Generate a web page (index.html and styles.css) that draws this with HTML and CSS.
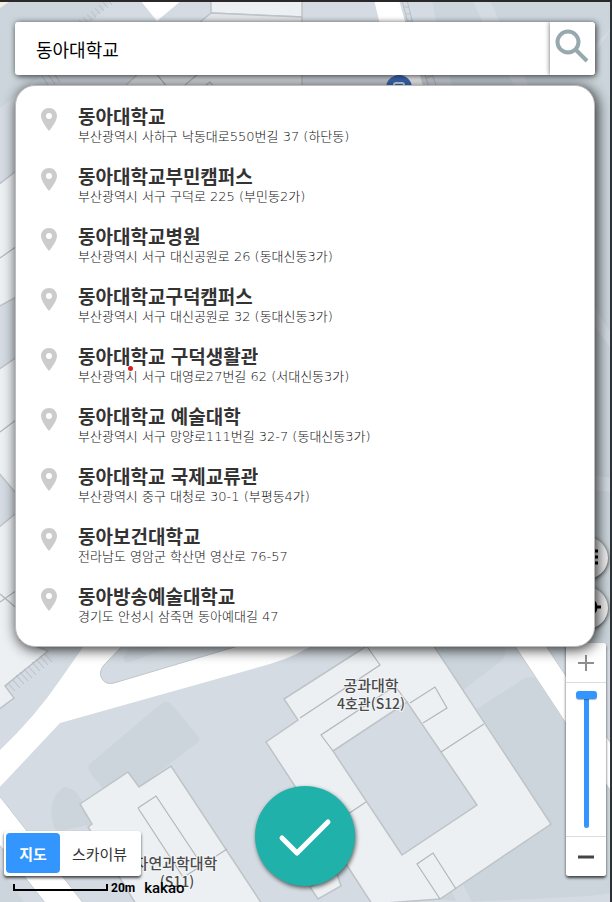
FILE: index.html
```html
<!DOCTYPE html>
<html lang="ko">
<head>
<meta charset="utf-8">
<meta name="viewport" content="width=device-width, initial-scale=1">
<title>동아대학교</title>
<link rel="stylesheet" href="styles.css">
</head>
<body>
<main class="stage">
  <svg class="map" viewBox="0 2 610 900" preserveAspectRatio="xMidYMin slice" aria-hidden="true">
    <rect class="ground" y="0" width="612" height="904"/>
    <!-- upper area -->
    <path class="green" d="M0 0H112L42 75 0 108Z"/>
    <path class="cream" d="M0 2H9L0 8Z"/>
    <path class="hatch" d="M79 20l5 6M83 17l5 6M87 14l5 6M91 11l5 6M95 8l5 6M99 5l5 6M103 2l5 6M108 0l4 5M42 76l6 9M47 73l8 11M52 71l8 11"/>
    <path class="road" d="M140 0H182L157 21Z"/>
    <path class="building" d="M211 0V13L302 17V0Z"/>
    <path class="building shade" d="M211 13L302 17V100H110L140 72Z"/>
    <path class="wall" d="M155 72L168 88M199 73L184 86M202 88l8-6 4 5"/>
    <path class="green" d="M432 0L440 40 470 100H612V650H580V90H500Z"/>
    <path class="green" d="M432 0H612V100H455Z"/>
    <path class="ground" d="M472 0H490L530 90H516ZM612 28L590 62V48ZM590 300L612 335V350L590 320ZM590 475L612 478V492L590 490Z"/>
    <path class="road" d="M374 0H399L424 90H396Z"/>
    <path class="hatch" d="M402 0L408 24 430 90M407 0L413 24 438 90M404 7h5M406 14h5M408 21h5M425 78l7-2"/>
    <circle cx="399" cy="88" r="13" fill="#3f6fc0"/>
    <rect x="394" y="83" width="10" height="8" rx="2" fill="none" stroke="#dfe9f8" stroke-width="2"/>
    <!-- left edge -->
    <path class="building" d="M-2 185L20 168V295L-2 307ZM-2 370L20 355V498L-2 472ZM-2 528L20 510V640L48 651 5 686 14 698-2 710Z"/>
    <path class="wall" d="M0 258L20 244M0 432L20 417M0 602L20 588M0 594L20 611"/>
    <path class="hatch" d="M48 651L5 686M44 653l8 9M40 656l8 9M36 659l8 9M32 662l8 9M28 666l8 9M24 669l8 9M20 672l8 9M16 675l8 9M12 679l8 9M8 683l7 8"/>
    <!-- lower left roads and greens -->
    <path class="road" d="M-2 752Q35 717 60 680L88 640H320Q300 655 270 664L60 723-2 789Z"/>
    <path class="island" d="M128 640L104 665Q98 672 102 679 106 685 114 683L238 646V640Z"/>
    <path class="green" d="M130 647L123 658Q125 664 130 662L170 647Z"/>
    <path class="green" d="M161 704Q167 699 172 705L198 736Q201 740 197 743L139 787 104 790 89 771Q87 766 91 763ZM64 787Q76 788 82 801L92 824 56 832Q44 801 64 787ZM0 868L24 902H0Z"/>
    <path class="road edge" d="M-2 794L84 904H46L-2 843Z"/>
    <path class="building" d="M80 804L128 772 139 787 171 766 262 904H136L88 827 92 824Z"/>
    <path class="wall" d="M138 808L156 796 202 865M138 808L185 880M227 849L184 877"/>
    <!-- lower right greens and road -->
    <path class="green" d="M432 640H505Q507 656 501 661L463 690ZM477 709L522 680Q529 675 535 678L612 790V895L465 902 440 899 551 824Z"/>
    <path class="ground" d="M450 889L462 882 473 904H458ZM545 902L612 893V904Z"/>
    <path class="road edge" d="M511 640H542L614 748V796Z"/>
    <!-- engineering hall -->
    <path class="building" d="M284 699L376 640H430L551 824 440 899 372 904 348 867 266 742 298 720Z"/>
    <path class="ground outline" d="M333 751L407 702 477 805 402 855Z"/>
    <path class="wall" d="M366 645L380 665 300 718M333 751L321 735 395 686 407 702M410 703L435 687 447 708 423 723M441 752L484 724M366 802L348 814M456 889L433 853 417 864 440 899"/>
    <path class="building" d="M310 887L337 874 341 886 318 899Z"/>
    <g class="map-label">
      <text x="371" y="691">공과대학</text>
      <text class="code" x="371" y="709">4호관(S12)</text>
      <text x="176" y="869">자연과학대학</text>
      <text class="code" x="177" y="887">(S11)</text>
    </g>
  </svg>

  <form class="search">
    <input class="search-input" type="text" value="동아대학교" aria-label="장소 검색">
    <button class="search-button" type="button" aria-label="검색">
      <svg width="45" height="53" viewBox="0 0 45 53"><circle cx="18" cy="20" r="10.5"/><path d="M25 27L37 39"/></svg>
    </button>
  </form>

  <svg class="defs" aria-hidden="true"><symbol id="pin" viewBox="0 0 16 23"><path fill-rule="evenodd" d="M8 0C3.500 0 0 3.500 0 8c0 5.500 8 15 8 15s8-9.500 8-15c0-4.500-3.500-8-8-8Zm0 5a3 3 0 1 1 0 6 3 3 0 0 1 0-6Z"/></symbol></svg>
  <ul class="results">
    <li><a class="place" href="#1"><svg class="pin"><use href="#pin"/></svg><span class="text"><strong>동아대학교</strong><span class="address">부산광역시 사하구 낙동대로550번길 37 (하단동)</span></span></a></li>
    <li><a class="place" href="#2"><svg class="pin"><use href="#pin"/></svg><span class="text"><strong>동아대학교부민캠퍼스</strong><span class="address">부산광역시 서구 구덕로 225 (부민동2가)</span></span></a></li>
    <li><a class="place" href="#3"><svg class="pin"><use href="#pin"/></svg><span class="text"><strong>동아대학교병원</strong><span class="address">부산광역시 서구 대신공원로 26 (동대신동3가)</span></span></a></li>
    <li><a class="place" href="#4"><svg class="pin"><use href="#pin"/></svg><span class="text"><strong>동아대학교구덕캠퍼스</strong><span class="address">부산광역시 서구 대신공원로 32 (동대신동3가)</span></span></a></li>
    <li><a class="place" href="#5"><svg class="pin"><use href="#pin"/></svg><span class="text"><strong>동아대학교 구덕생활관</strong><span class="address">부산광역시 서구 대영로27번길 62 (서대신동3가)</span></span><span class="dot"></span></a></li>
    <li><a class="place" href="#6"><svg class="pin"><use href="#pin"/></svg><span class="text"><strong>동아대학교 예술대학</strong><span class="address">부산광역시 서구 망양로111번길 32-7 (동대신동3가)</span></span></a></li>
    <li><a class="place" href="#7"><svg class="pin"><use href="#pin"/></svg><span class="text"><strong>동아대학교 국제교류관</strong><span class="address">부산광역시 중구 대청로 30-1 (부평동4가)</span></span></a></li>
    <li><a class="place" href="#8"><svg class="pin"><use href="#pin"/></svg><span class="text"><strong>동아보건대학교</strong><span class="address">전라남도 영암군 학산면 영산로 76-57</span></span></a></li>
    <li><a class="place" href="#9"><svg class="pin"><use href="#pin"/></svg><span class="text"><strong>동아방송예술대학교</strong><span class="address">경기도 안성시 삼죽면 동아예대길 47</span></span></a></li>
  </ul>

  <div class="tools">
    <button class="round" type="button" aria-label="목록"><svg width="42" height="42" viewBox="0 0 42 42"><path d="M14 14H32M14 20H32M14 26H32"/></svg></button>
    <button class="round" type="button" aria-label="현재 위치"><svg width="42" height="42" viewBox="0 0 42 42"><circle cx="22" cy="20" r="8"/><path d="M22 7v7M22 26v7M9 20h7M28 20h7"/></svg></button>
    <div class="zoom">
      <button type="button" aria-label="확대"><svg class="plus" width="16" height="16" viewBox="0 0 16 16"><path d="M8 0V16M0 8H16"/></svg></button>
      <input class="level" type="range" min="1" max="14" value="1" aria-label="지도 레벨">
      <button type="button" aria-label="축소"><svg class="minus" width="16" height="16" viewBox="0 0 16 16"><path d="M0 8H16"/></svg></button>
    </div>
  </div>

  <div class="legend">
    <div class="types">
      <button class="type active" type="button">지도</button>
      <button class="type" type="button">스카이뷰</button>
    </div>
    <div class="scale"><span class="bar"></span><span class="distance">20m</span><span class="brand">kakao</span></div>
  </div>

  <button class="confirm" type="button" aria-label="확인"><svg width="100" height="100" viewBox="0 0 100 100"><path d="M27 52L42 67 73 36"/></svg></button>
</main>
</body>
</html>
```
FILE: styles.css
```css
* { box-sizing: border-box; }

body {
  margin: 0;
  border-top: 2px solid #2a2828;
  border-right: 2px solid #2e3134;
  font-family: "Noto Sans CJK KR", sans-serif;
  color: #333;
}

button { padding: 0; border: 0; background: #fff; font: inherit; color: inherit; cursor: pointer; }
svg { display: block; }

.stage {
  position: relative;
  display: flex;
  flex-direction: column;
  gap: 10px;
  min-height: calc(100vh - 2px);
  padding: 20px 15px;
  overflow: hidden;
}

/* map canvas */
.map { position: absolute; inset: 0; width: 100%; height: 100%; }
.ground { fill: #d4dbe2; }
.green { fill: #cbd5db; }
.cream { fill: #f5efdf; }
.road { fill: #fff; }
.edge { stroke: #c6ccd1; }
.island { fill: #d4dbe2; stroke: #c0c6cb; }
.building { fill: #ecf0f3; stroke: #bec3c7; stroke-width: 1.5; }
.shade { fill: #e2e4e7; }
.outline { stroke: #bec3c7; stroke-width: 1.5; }
.wall { fill: none; stroke: #b2b6b9; stroke-width: 1.2; }
.hatch { fill: none; stroke: #b9bfc4; }
.map-label { font-size: 15px; font-weight: 500; text-anchor: middle; fill: #4a4a4a; stroke: #f4f6f7; stroke-width: 2px; paint-order: stroke; }
.code { font-size: 14px; }

/* search */
.search {
  position: relative;
  z-index: 2;
  display: flex;
  height: 53px;
  border-radius: 3px;
  background: #fff;
  box-shadow: 1px 1px 6px rgba(0, 0, 0, .8);
}
.search-input {
  flex: 1;
  min-width: 0;
  padding: 0 21px;
  border: 0;
  border-radius: 3px;
  outline: 0;
  background: transparent;
  font: 18px "Noto Sans CJK KR", sans-serif;
  color: #000;
}
.search-button { width: 45px; border-radius: 0 3px 3px 0; box-shadow: 0 0 5px rgba(0, 0, 0, .6); clip-path: inset(0 0 0 -8px); }
.search-button svg { fill: none; stroke: #97a9ae; stroke-width: 4; }

/* results */
.defs { position: absolute; width: 0; height: 0; }
.results {
  position: relative;
  z-index: 1;
  margin: 0;
  padding: 9px 0 11px;
  list-style: none;
  border: 1px solid #bbb;
  border-radius: 20px;
  background: #fff;
  box-shadow: 2px 2px 14px rgba(0, 0, 0, .85);
}
.place {
  position: relative;
  display: flex;
  gap: 21px;
  height: 60px;
  padding: 9px 25px;
  color: #333;
  text-decoration: none;
}
.pin { flex: none; width: 16px; height: 23px; margin-top: 4px; fill: #ccc; }
.text { display: flex; flex-direction: column; }
.text strong { font-size: 19px; line-height: 24px; font-weight: 700; }
.address { font-family: "DejaVu Sans", "Noto Sans CJK KR", sans-serif; font-size: 13px; line-height: 18px; font-weight: 200; color: #111; }
.dot { position: absolute; left: 112px; top: 31px; width: 5px; height: 5px; border-radius: 50%; background: #e01b1b; }

/* right-hand tools */
.tools { position: absolute; right: 2px; bottom: 26px; display: flex; flex-direction: column; gap: 8px; }
.round { width: 42px; height: 42px; border-radius: 50%; background: #eee; box-shadow: 0 1px 4px rgba(0, 0, 0, .8); }
.round svg { fill: none; stroke: #000; stroke-width: 3; }
.zoom {
  display: flex;
  flex-direction: column;
  align-items: stretch;
  width: 40px;
  margin-top: 6px;
  border-radius: 3px;
  background: #fff;
  box-shadow: 0 2px 3px rgba(0, 0, 0, .7);
}
.zoom button { display: grid; place-items: center; height: 39px; border-radius: 3px; }
.plus { stroke: #8f8f8f; stroke-width: 2; }
.minus { stroke: #444; stroke-width: 3; }
.level {
  appearance: none;
  writing-mode: vertical-lr;
  width: 40px;
  height: 155px;
  margin: 0;
  padding: 8px 0;
  border: solid #ddd;
  border-width: 1px 0;
  background: #fff;
}
.level::-webkit-slider-runnable-track { width: 5px; border-radius: 3px; background: #3396ff; }
.level::-webkit-slider-thumb {
  appearance: none;
  width: 21px;
  height: 8px;
  margin-left: -8px;
  border-radius: 3px;
  background: #3396ff;
  box-shadow: 0 1px 1px rgba(0, 0, 0, .3);
}

/* legend */
.legend { position: absolute; left: 4px; bottom: 3px; }
.types {
  display: flex;
  width: 137px;
  height: 45px;
  padding: 2px;
  border-radius: 3px;
  background: #fff;
  box-shadow: 0 2px 3px rgba(0, 0, 0, .7);
}
.type { flex: 1; height: 40px; font-size: 15px; }
.type.active { flex: none; width: 54px; border-radius: 4px; background: #3396ff; color: #fff; font-weight: 700; }
.scale { display: flex; align-items: center; height: 23px; padding-left: 9px; color: #000; }
.bar { width: 95px; height: 7px; border: solid #000; border-width: 0 2px 2px; }
.distance { margin-left: 3px; font: bold 12px Roboto, sans-serif; }
.brand { margin-left: 9px; font: 500 15px Roboto, sans-serif; }

/* confirm */
.confirm {
  position: absolute;
  left: 50%;
  bottom: 16px;
  width: 100px;
  height: 100px;
  margin-left: -50px;
  border-radius: 50%;
  background: #20b2aa;
  box-shadow: 1px 2px 4px rgba(0, 0, 0, .6);
}
.confirm svg { fill: none; stroke: #fff; stroke-width: 5; stroke-linecap: round; stroke-linejoin: round; }
```
